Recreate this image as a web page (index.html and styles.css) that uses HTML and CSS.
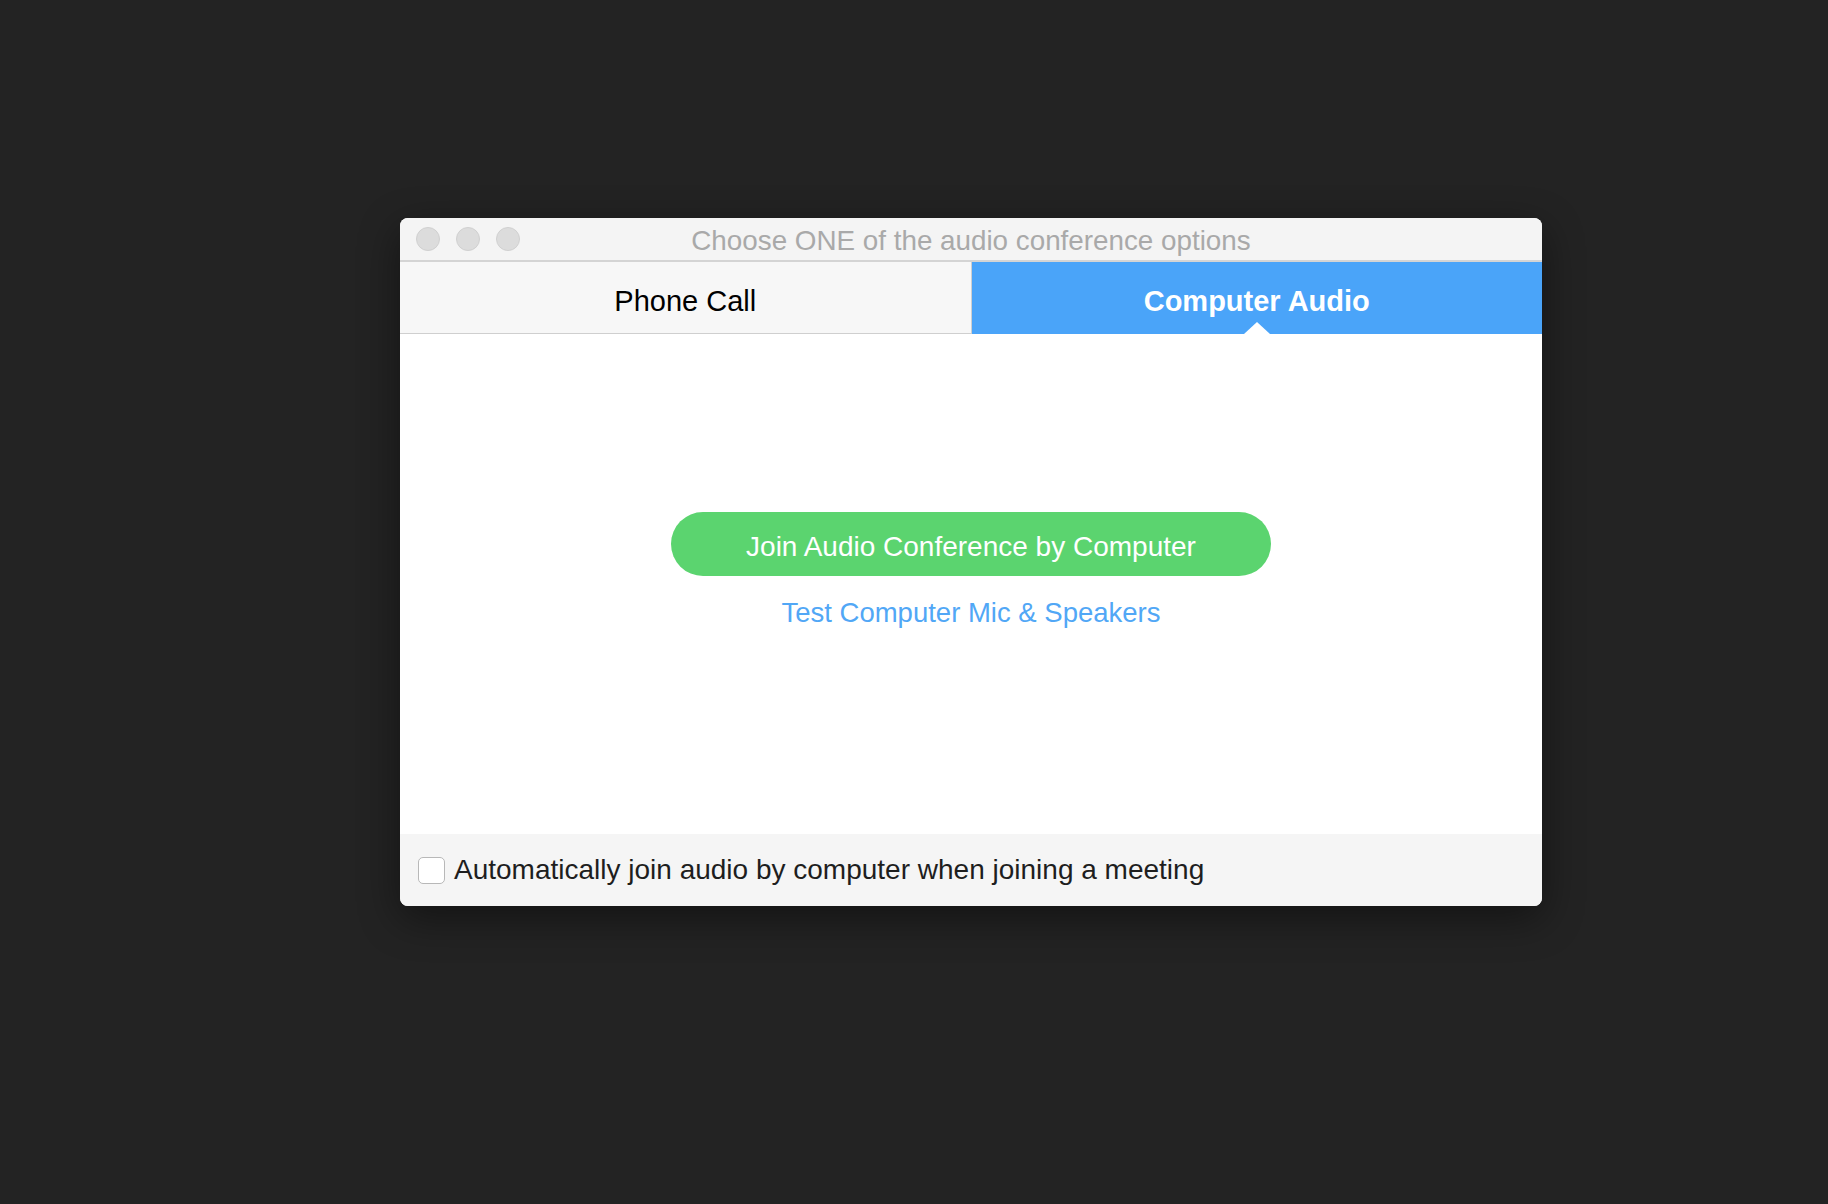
FILE: index.html
```html
<!DOCTYPE html>
<html lang="en">
<head>
  <meta charset="UTF-8">
  <title>Choose ONE of the audio conference options</title>
  <link rel="stylesheet" href="styles.css">
</head>
<body>

  <!-- Ventana de audio -->
  <div class="window">
    <div class="titlebar">
      <div class="lights">
        <span class="light"></span>
        <span class="light"></span>
        <span class="light"></span>
      </div>
      <div class="title">Choose ONE of the audio conference options</div>
    </div>

    <!-- Pestañas -->
    <div class="tabs">
      <div class="tab">Phone Call</div>
      <div class="tab active">Computer Audio</div>
    </div>

    <!-- Contenido -->
    <div class="content">
      <button class="join">Join Audio Conference by Computer</button>
      <a class="test" href="#">Test Computer Mic &amp; Speakers</a>
    </div>

    <!-- Pie -->
    <label class="footer">
      <span class="check"></span>
      <span>Automatically join audio by computer when joining a meeting</span>
    </label>
  </div>

</body>
</html>
```

FILE: styles.css
```css
html, body {
  margin: 0;
  padding: 0;
  height: 100%;
  background: #232323;
  font-family: 'Liberation Sans', Arial, sans-serif;
  overflow: hidden;
}

body {
  padding: 218px 0 0 400px;
  box-sizing: border-box;
}

.window {
  width: 1142px;
  background: #fff;
  border-radius: 8px;
  overflow: hidden;
  box-shadow: 0 12px 40px rgba(0, 0, 0, 0.45);
}

.titlebar {
  position: relative;
  height: 42px;
  background: #f4f4f4;
  border-bottom: 2px solid #d4d4d4;
  display: flex;
  align-items: center;
  justify-content: center;
}

.lights {
  position: absolute;
  left: 16px;
  top: 9px;
  display: flex;
  gap: 16px;
}

.light {
  width: 22px;
  height: 22px;
  border-radius: 50%;
  background: #dcdcdc;
  border: 1px solid #d0d0d0;
}

.title {
  font-size: 27.8px;
  color: #a9a9a9;
  margin-top: 4px;
}

.tabs {
  display: flex;
  height: 72px;
}

.tab {
  flex: 1;
  display: flex;
  align-items: center;
  justify-content: center;
  font-size: 29px;
  color: #000;
  background: #f7f7f7;
  border-right: 1px solid #cfcfcf;
  border-bottom: 1px solid #cfcfcf;
  padding-top: 8px;
  box-sizing: border-box;
}

.tab.active {
  position: relative;
  background: #4aa4f9;
  color: #fff;
  font-weight: bold;
  border: none;
  padding-top: 7px;
}

.tab.active::after {
  content: "";
  position: absolute;
  bottom: 0;
  left: 50%;
  margin-left: -13px;
  border-left: 13px solid transparent;
  border-right: 13px solid transparent;
  border-bottom: 12px solid #fff;
}

.content {
  height: 500px;
  display: flex;
  flex-direction: column;
  align-items: center;
  padding-top: 178px;
  box-sizing: border-box;
}

.join {
  width: 600px;
  height: 64px;
  border: none;
  border-radius: 32px;
  background: #5bd46f;
  color: #fff;
  font-family: inherit;
  font-size: 28px;
  padding: 5px 0 0;
  cursor: pointer;
}

.test {
  margin-top: 21px;
  font-size: 27.5px;
  line-height: 32px;
  color: #51a7f6;
  text-decoration: none;
}

.footer {
  height: 72px;
  background: #f5f5f5;
  display: flex;
  align-items: center;
  gap: 9px;
  padding-left: 18px;
  font-size: 28px;
  color: #1e1e1e;
}

.check {
  width: 25px;
  height: 25px;
  border: 1px solid #b8b8b8;
  border-radius: 5px;
  background: #fff;
}
```
